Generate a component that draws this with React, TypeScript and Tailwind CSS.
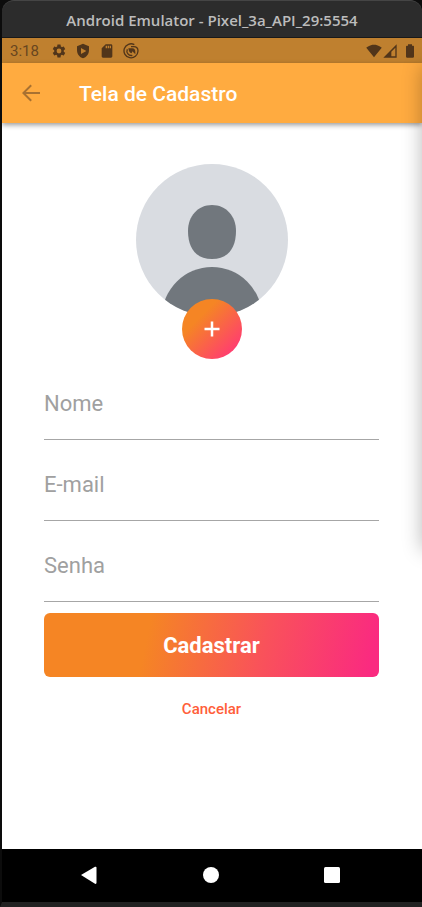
import type { ReactNode } from "react";

function StatusIcon({ size, children }: { size: string; children: ReactNode }) {
  return (
    <svg viewBox="0 0 24 24" className={size} fill="currentColor" aria-hidden="true">
      {children}
    </svg>
  );
}

function TitleBar() {
  return (
    <header className="flex h-[38px] items-center justify-center rounded-t-xl border-t border-b border-t-[#454545] border-b-[#191919] bg-[#2c2c2c] pt-0.5 font-['Open_Sans',sans-serif] text-[15px] leading-5 font-semibold text-[#bcbcbc]">
      <h1>Android Emulator - Pixel_3a_API_29:5554</h1>
    </header>
  );
}

function StatusBar() {
  return (
    <div className="flex h-[25px] items-center bg-[#bf802f] pr-1 pl-2 text-[#51351a]">
      <span className="mr-3 text-[15px] leading-5 text-[#684620]">3:18</span>
      <div className="flex flex-1 items-center gap-2">
        <StatusIcon size="size-4">
          <path d="M19.14 12.94c.04-.3.06-.61.06-.94 0-.32-.02-.64-.07-.94l2.03-1.58a.49.49 0 0 0 .12-.61l-1.92-3.32a.49.49 0 0 0-.59-.22l-2.39.96c-.5-.38-1.03-.7-1.62-.94l-.36-2.54a.48.48 0 0 0-.48-.41h-3.84c-.24 0-.43.17-.47.41l-.36 2.54c-.59.24-1.13.57-1.62.94l-2.39-.96c-.22-.08-.47 0-.59.22L2.74 8.87c-.12.21-.08.47.12.61l2.03 1.58c-.05.3-.09.63-.09.94s.02.64.07.94l-2.03 1.58a.49.49 0 0 0-.12.61l1.92 3.32c.12.22.37.29.59.22l2.39-.96c.5.38 1.03.7 1.62.94l.36 2.54c.05.24.24.41.48.41h3.84c.24 0 .44-.17.47-.41l.36-2.54c.59-.24 1.13-.56 1.62-.94l2.39.96c.22.08.47 0 .59-.22l1.92-3.32a.49.49 0 0 0-.12-.61zM12 15.6A3.6 3.6 0 1 1 12 8.4a3.6 3.6 0 0 1 0 7.2z" />
        </StatusIcon>
        <StatusIcon size="size-4">
          <path fillRule="evenodd" d="M12 1 3 5v6c0 5.55 3.84 10.74 9 12 5.16-1.26 9-6.45 9-12V5zM9 7.5l8 4.5-8 4.5z" />
        </StatusIcon>
        <StatusIcon size="size-4">
          <path d="M18 2h-8L4.02 8 4 20c0 1.1.9 2 2 2h12c1.1 0 2-.9 2-2V4c0-1.1-.9-2-2-2zm-6 6h-2V4h2zm3 0h-2V4h2zm3 0h-2V4h2z" />
        </StatusIcon>
        <StatusIcon size="size-4">
          <g fill="none" stroke="currentColor" strokeWidth="2">
            <path d="M17 2.500A10.500 10.500 0 1 0 22.500 12C22.500 8 20 5.500 16 5.500H12" />
            <path d="M6.500 9.500A6.500 6.500 0 0 0 14 18.500" />
          </g>
          <path d="M8 8h6c3 0 4.500 2.500 4.500 5.500V17L14 12.500l-1 3C10 15 8.500 12 8 8z" />
        </StatusIcon>
      </div>
      <div className="flex items-center">
        <StatusIcon size="size-4">
          <path d="M12 21.500 23.600 7C23.200 6.700 18.700 2.500 12 2.500S.8 6.700.4 7z" />
        </StatusIcon>
        <StatusIcon size="size-4">
          <path fillRule="evenodd" d="M2 22h20V2zM20 7v13h-6v-7z" />
        </StatusIcon>
        <span className="ml-1">
          <StatusIcon size="size-4">
            <path d="M17 4h-2V2H9v2H7.300C6.600 4 6 4.600 6 5.300v15.400c0 .7.600 1.300 1.300 1.300h9.400c.7 0 1.300-.6 1.300-1.300V5.300C18 4.600 17.700 4 17 4z" />
          </StatusIcon>
        </span>
      </div>
    </div>
  );
}

function AppBar() {
  return (
    <div className="flex h-[60px] items-center bg-[#ffab40] px-[17px] shadow-[0_2px_5px_rgba(0,0,0,0.4)]">
      <button type="button" aria-label="Voltar" className="mr-9 text-[#a87131]">
        <svg viewBox="0 0 24 24" className="size-6" fill="currentColor">
          <path d="M21 11H6.830l6.090-6.090L11.500 3.500 3 12l8.500 8.500 1.410-1.410L6.830 13H21z" />
        </svg>
      </button>
      <h2 className="pt-0.5 text-[21px] leading-7 font-medium text-white">Tela de Cadastro</h2>
    </div>
  );
}

function Avatar() {
  return (
    <div className="flex flex-col items-center">
      <svg viewBox="0 0 152 152" className="size-[152px]" role="img" aria-label="Foto">
        <defs>
          <clipPath id="avatar-circle">
            <circle cx="76" cy="76" r="76" />
          </clipPath>
        </defs>
        <g clipPath="url(#avatar-circle)">
          <rect width="152" height="152" fill="#d9dce1" />
          <path d="M76 41c14 0 24 11 24 26 0 17-8 28-24 28S52 84 52 67c0-15 10-26 24-26z" fill="#71777d" />
          <circle cx="76" cy="153" r="50" fill="#71777d" />
        </g>
      </svg>
      <button
        type="button"
        aria-label="Adicionar foto"
        className="relative -mt-[17px] flex size-[60px] items-center justify-center rounded-full bg-linear-[135deg,#f58524_30%,#ff3f6e_85%] text-white"
      >
        <svg viewBox="0 0 24 24" className="size-6" fill="none" stroke="currentColor" strokeWidth="2.5">
          <path d="M12 4.500v15M4.500 12h15" />
        </svg>
      </button>
    </div>
  );
}

function Field({ label, type }: { label: string; type: string }) {
  return (
    <input
      type={type}
      aria-label={label}
      placeholder={label}
      className="block h-[81px] w-full border-b border-[#a6a6a6] bg-transparent pt-2 text-[22px] leading-7 outline-none placeholder:text-[#a0a0a0]"
    />
  );
}

function NavigationBar() {
  return (
    <nav className="grid h-[53px] grid-cols-3 items-center justify-items-center bg-black pr-[29px] pl-[27px] text-white">
      <button type="button" aria-label="Voltar">
        <svg viewBox="0 0 20 20" className="size-5" fill="currentColor">
          <path d="M1 9 15 .8Q16.500.3 16.500 1.800v15q0 1.500-1.500 1z" />
        </svg>
      </button>
      <button type="button" aria-label="Início">
        <svg viewBox="0 0 20 20" className="size-5" fill="currentColor">
          <circle cx="10" cy="9" r="8" />
        </svg>
      </button>
      <button type="button" aria-label="Recentes">
        <svg viewBox="0 0 20 20" className="size-5" fill="currentColor">
          <rect x="2" y="1" width="16" height="16" rx="1.500" />
        </svg>
      </button>
    </nav>
  );
}

export default function App() {
  return (
    <div className="relative flex min-h-screen flex-col overflow-hidden border-b-[5px] border-l-2 border-b-[#222222] border-l-[#0c0c0c] bg-[#0c0c0c] font-[Roboto,sans-serif]">
      <TitleBar />
      <StatusBar />
      <main className="flex flex-1 flex-col bg-white">
        <AppBar />
        <form className="flex flex-col pt-[41px] pr-[43px] pl-[42px]" onSubmit={(event) => event.preventDefault()}>
          <Avatar />
          <Field label="Nome" type="text" />
          <Field label="E-mail" type="email" />
          <Field label="Senha" type="password" />
          <button
            type="submit"
            className="mt-[11px] h-16 rounded-md bg-linear-[102deg,#f58524_31%,#f9525a_65%,#fa2a80_97%] pt-0.5 text-[22px] leading-7 font-bold text-white"
          >
            Cadastrar
          </button>
          <button type="button" className="mt-[22px] self-center text-[15px] leading-5 font-medium text-[#ff5e3a]">
            Cancelar
          </button>
        </form>
      </main>
      <NavigationBar />
      <div className="pointer-events-none absolute top-[66px] left-full h-[484px] w-12 shadow-[0_0_20px_rgba(0,0,0,0.28)]" />
    </div>
  );
}
